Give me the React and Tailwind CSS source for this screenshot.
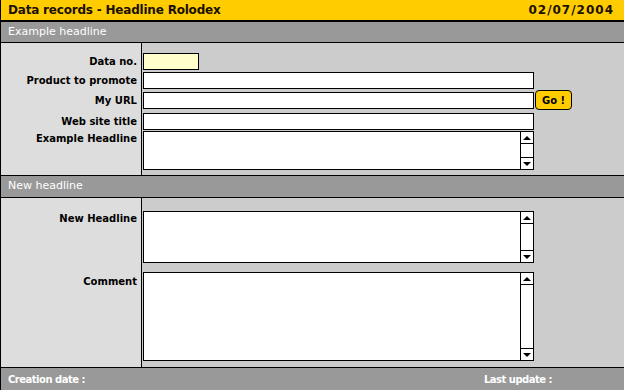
const font = { fontFamily: '"DejaVu Sans", Verdana, sans-serif' };

const Box = ({ className = '' }) => (
  <div className={`h-[17px] border border-black ${className}`} />
);

const Scroll = ({ className = '' }) => (
  <div className={`flex border border-black bg-white w-[391px] ${className}`}>
    <div className="flex-1" />
    <div className="w-[13px] border-l border-black flex flex-col justify-between">
      <div className="h-[12px] border-b border-black flex items-center justify-center">
        <div className="w-0 h-0 border-l-[4px] border-r-[4px] border-b-[4px] border-transparent border-b-black" />
      </div>
      <div className="h-[12px] border-t border-black flex items-center justify-center">
        <div className="w-0 h-0 border-l-[4px] border-r-[4px] border-t-[4px] border-transparent border-t-black" />
      </div>
    </div>
  </div>
);

const Label = ({ children, className = '' }) => (
  <div className={`bg-[#dddddd] border-r border-black flex justify-end pr-[4px] ${className}`}>
    <span className="h-[17px] flex items-center text-[10px] font-bold text-black">{children}</span>
  </div>
);

const Bar = ({ children, className = '' }) => (
  <div className={`bg-[#999999] flex items-center px-[7px] text-[11px] text-white ${className}`}>
    {children}
  </div>
);

export default function App() {
  return (
    <div style={font} className="w-[624px] h-[390px] overflow-hidden flex flex-col border-l border-black bg-[#cccccc]">
      <div className="h-[22px] shrink-0 bg-[#ffcc00] border-b-2 border-black flex items-center justify-between pl-[7px] pr-[10px] text-[#1a1000] font-bold">
        <span className="text-[12px] tracking-[-0.2px]">Data records - Headline Rolodex</span>
        <span className="text-[12px] tracking-[1px]">02/07/2004</span>
      </div>
      <Bar className="h-[21px] shrink-0 border-b border-black">Example headline</Bar>

      <div className="grid grid-cols-[141px_1fr] shrink-0">
        <Label className="h-[28px] pt-[10px]">Data no.</Label>
        <div className="h-[28px] pt-[10px] pl-[1px]">
          <Box className="w-[56px] bg-[#ffffcc]" />
        </div>

        <Label className="h-[19px] pt-[1px]">Product to promote</Label>
        <div className="h-[19px] pt-[1px] pl-[1px]">
          <Box className="w-[391px] bg-white" />
        </div>

        <Label className="h-[21px] pt-[2px]">My URL</Label>
        <div className="h-[21px] pl-[1px] flex items-start gap-[1px]">
          <Box className="w-[391px] bg-white mt-[2px]" />
          <button className="h-[20px] w-[37px] rounded-[4px] border border-black bg-[#ffcc00] text-[10px] font-bold text-black flex items-center justify-center">
            Go !
          </button>
        </div>

        <Label className="h-[19px] pt-[2px]">Web site title</Label>
        <div className="h-[19px] pt-[2px] pl-[1px]">
          <Box className="w-[391px] bg-white" />
        </div>

        <Label className="h-[45px] pt-[0px]">Example Headline</Label>
        <div className="h-[45px] pt-[1px] pl-[1px]">
          <Scroll className="h-[39px]" />
        </div>
      </div>

      <Bar className="h-[23px] shrink-0 border-y border-black">New headline</Bar>

      <div className="grid grid-cols-[141px_1fr] shrink-0">
        <Label className="h-[71px] pt-[12px]">New Headline</Label>
        <div className="h-[71px] pt-[13px] pl-[1px]">
          <Scroll className="h-[52px]" />
        </div>

        <Label className="h-[98px] pt-[4px]">Comment</Label>
        <div className="h-[98px] pt-[3px] pl-[1px]">
          <Scroll className="h-[89px]" />
        </div>
      </div>

      <div className="flex-1 bg-[#999999] border-t border-black flex items-center text-[10px] font-bold text-white tracking-[-0.5px]">
        <span className="pl-[7px] w-[483px]">Creation date :</span>
        <span>Last update :</span>
      </div>
    </div>
  );
}
